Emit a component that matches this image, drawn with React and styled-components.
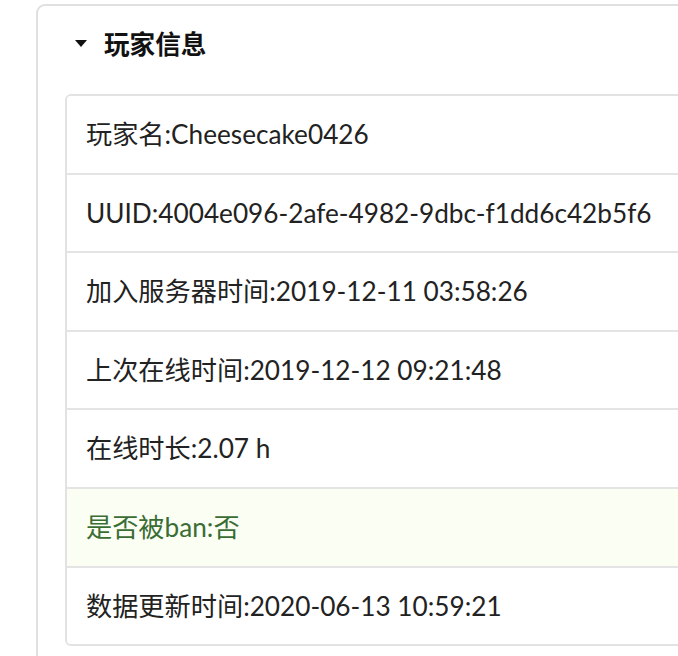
import styled, { createGlobalStyle } from "styled-components";

const GlobalStyle = createGlobalStyle`
    html, body {
        margin: 0;
        padding: 0;
        background: #fff;
        overflow: hidden;
    }
    body {
        font-family: Lato, "Noto Sans CJK SC", sans-serif;
        color: #222;
    }
`

const rows = [
    { label: "玩家名", value: "Cheesecake0426" },
    { label: "UUID", value: "4004e096-2afe-4982-9dbc-f1dd6c42b5f6" },
    { label: "加入服务器时间", value: "2019-12-11 03:58:26" },
    { label: "上次在线时间", value: "2019-12-12 09:21:48" },
    { label: "在线时长", value: "2.07 h" },
    { label: "是否被ban", value: "否", success: true },
    { label: "数据更新时间", value: "2020-06-13 10:59:21" },
];

function App(){
    return(
        <Page>
            <GlobalStyle/>
            <Panel open>
                <Summary>
                    <Caret viewBox="0 0 12 7"><path d="M0 0 H12 L6 7 Z" fill="#111"/></Caret>
                    玩家信息
                </Summary>
                <List>
                    {rows.map((row) => (
                        <Item key={row.label} $success={row.success}>
                            {row.label}:{row.value}
                        </Item>
                    ))}
                </List>
            </Panel>
        </Page>
    )
}

const Page = styled.div`
    padding: 4px 0 0 36px;
    width: 760px;
`

const Panel = styled.details`
    border: 2px solid #e0e0e0;
    border-radius: 9px;
    padding: 19px 0 30px 27px;
`

const Summary = styled.summary`
    list-style: none;
    display: flex;
    align-items: center;
    gap: 17px;
    padding-left: 10px;
    font-size: 25.6px;
    font-weight: 700;
    line-height: 38px;
    color: #111;
    margin-bottom: 31px;
    cursor: pointer;
    &::-webkit-details-marker{
        display: none;
    }
`

const Caret = styled.svg`
    width: 12px;
    height: 7px;
    margin-top: -2px;
`

const List = styled.div`
    border: 2px solid #e2e2e2;
    border-radius: 6px;
    overflow: hidden;
`

const Item = styled.div`
    padding: 19px 19px;
    font-size: 26.2px;
    line-height: 38.6px;
    color: ${p => p.$success ? "#3a6d34" : "#222"};
    background: ${p => p.$success ? "#fbfef3" : "#fff"};
    border-top: 2px solid #e4e4e4;
    &:first-child{
        border-top: none;
    }
`

export default App;
